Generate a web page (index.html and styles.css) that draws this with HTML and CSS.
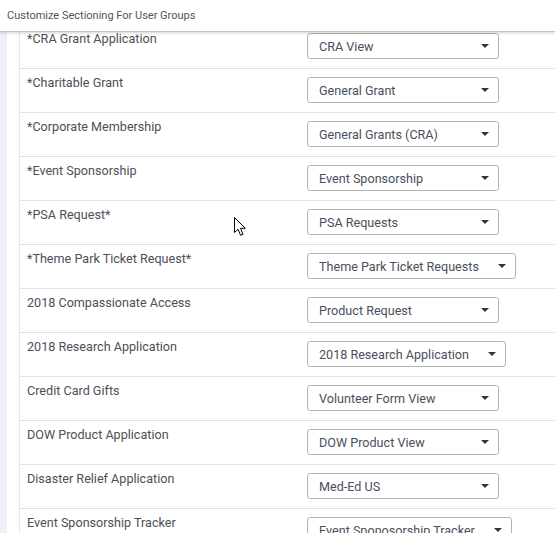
FILE: index.html
```html
<!DOCTYPE html>
<html lang="en">
<head>
<meta charset="utf-8">
<title>Customize Sectioning For User Groups</title>
<link rel="stylesheet" href="styles.css">
</head>
<body>
<div class="dialog">
  <header class="dialog-head">Customize Sectioning For User Groups</header>
  <div class="layout">
    <div class="rail"></div>
    <div class="gutter"></div>
    <div class="sections">
      <div class="row"><div class="label">*CRA Grant Application</div><div class="cell"><div class="select">CRA View<span class="caret"></span></div></div></div>
      <div class="row"><div class="label">*Charitable Grant</div><div class="cell"><div class="select">General Grant<span class="caret"></span></div></div></div>
      <div class="row"><div class="label">*Corporate Membership</div><div class="cell"><div class="select">General Grants (CRA)<span class="caret"></span></div></div></div>
      <div class="row"><div class="label">*Event Sponsorship</div><div class="cell"><div class="select">Event Sponsorship<span class="caret"></span></div></div></div>
      <div class="row"><div class="label">*PSA Request*</div><div class="cell"><div class="select">PSA Requests<span class="caret"></span></div></div></div>
      <div class="row"><div class="label">*Theme Park Ticket Request*</div><div class="cell"><div class="select">Theme Park Ticket Requests<span class="caret"></span></div></div></div>
      <div class="row"><div class="label">2018 Compassionate Access</div><div class="cell"><div class="select">Product Request<span class="caret"></span></div></div></div>
      <div class="row"><div class="label">2018 Research Application</div><div class="cell"><div class="select">2018 Research Application<span class="caret"></span></div></div></div>
      <div class="row"><div class="label">Credit Card Gifts</div><div class="cell"><div class="select">Volunteer Form View<span class="caret"></span></div></div></div>
      <div class="row"><div class="label">DOW Product Application</div><div class="cell"><div class="select">DOW Product View<span class="caret"></span></div></div></div>
      <div class="row"><div class="label">Disaster Relief Application</div><div class="cell"><div class="select">Med-Ed US<span class="caret"></span></div></div></div>
      <div class="row"><div class="label">Event Sponsorship Tracker</div><div class="cell"><div class="select">Event Sponosorship Tracker<span class="caret"></span></div></div></div>
    </div>
  </div>
  <svg class="pointer" width="13" height="20" viewBox="0 0 13 20" aria-hidden="true">
    <path d="M0.5 0.5 L0.5 15.5 L4 12.2 L6.6 18.3 L9 17.3 L6.5 11.3 L11.3 11.3 Z" fill="#fff" stroke="#000" stroke-width="1" stroke-linejoin="miter"/>
  </svg>
</div>
</body>
</html>
```
FILE: styles.css
```css
html, body {
  margin: 0;
  padding: 0;
  background: #fff;
}

body {
  font-family: Roboto, "Liberation Sans", Arial, sans-serif;
  color: #4d4f55;
  width: 555px;
  height: 533px;
  overflow: hidden;
}

.dialog {
  position: relative;
  height: 533px;
  overflow: hidden;
}

/* title bar floats over the scrolled list */
.dialog-head {
  position: absolute;
  top: 0;
  left: 0;
  right: 0;
  height: 32px;
  box-sizing: border-box;
  padding: 9px 0 0 7px;
  font-size: 11px;
  line-height: 14px;
  color: #555;
  background: #fff;
  border-bottom: 1px solid #c4c4c4;
  box-shadow: 0 1px 3px rgba(0, 0, 0, 0.18);
  z-index: 2;
}

.layout {
  display: flex;
  height: 100%;
}

.rail {
  width: 7px;
  flex: none;
  background: #eef1f5;
}

.gutter {
  width: 12px;
  flex: none;
  background: #fff;
  border-right: 1px solid #e3e7ec;
}

.sections {
  flex: 1;
  padding-top: 25px;
}

.row {
  display: grid;
  grid-template-columns: 287px 1fr;
  height: 43px;
  border-bottom: 1px solid #dde3ea;
}

.label {
  padding: 5px 0 0 7px;
  font-size: 12.6px;
  line-height: 18px;
  color: #4d4f55;
}

.cell {
  padding-top: 8px;
}

.select {
  position: relative;
  display: inline-flex;
  align-items: center;
  box-sizing: border-box;
  min-width: 192px;
  height: 26px;
  padding: 0 36px 0 11px;
  border: 1px solid #b5b5b5;
  border-radius: 3px;
  font-size: 12.6px;
  color: #4a4f5c;
  white-space: nowrap;
  background: #fff;
}

.caret {
  position: absolute;
  right: 9px;
  top: 10px;
  width: 0;
  height: 0;
  border-left: 4.5px solid transparent;
  border-right: 4.5px solid transparent;
  border-top: 4.5px solid #333;
}

.pointer {
  position: absolute;
  left: 234px;
  top: 217px;
  z-index: 3;
}
```
